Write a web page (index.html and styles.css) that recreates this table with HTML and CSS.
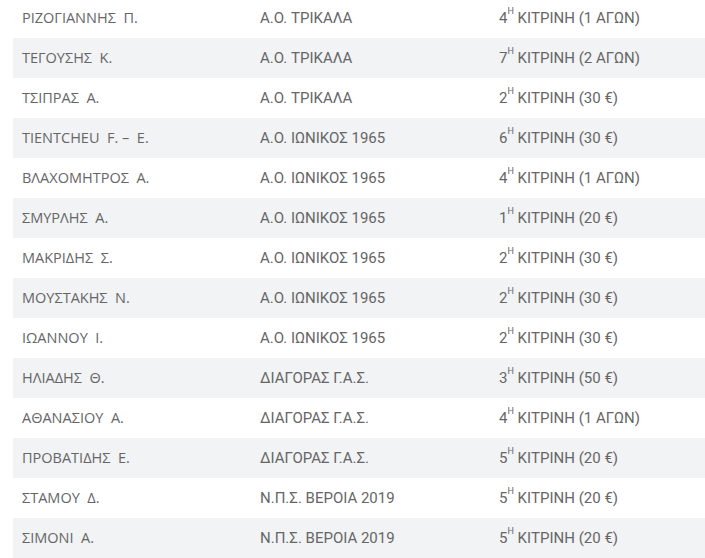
FILE: index.html
```html
<!DOCTYPE html>
<html lang="el">
<head>
<meta charset="utf-8">
<link rel="stylesheet" href="styles.css">
</head>
<body>
<div class="table">
  <div class="row"><div class="c name">ΡΙΖΟΓΙΑΝΝΗΣ&nbsp; Π.</div><div class="c team">Α.Ο. ΤΡΙΚΑΛΑ</div><div class="c pen">4<sup>Η</sup> ΚΙΤΡΙΝΗ (1 ΑΓΩΝ)</div></div>
  <div class="row"><div class="c name">ΤΕΓΟΥΣΗΣ&nbsp; Κ.</div><div class="c team">Α.Ο. ΤΡΙΚΑΛΑ</div><div class="c pen">7<sup>Η</sup> ΚΙΤΡΙΝΗ (2 ΑΓΩΝ)</div></div>
  <div class="row"><div class="c name">ΤΣΙΠΡΑΣ&nbsp; Α.</div><div class="c team">Α.Ο. ΤΡΙΚΑΛΑ</div><div class="c pen">2<sup>Η</sup> ΚΙΤΡΙΝΗ (30 €)</div></div>
  <div class="row"><div class="c name">TIENTCHEU&nbsp; F. –&nbsp; E.</div><div class="c team">Α.Ο. ΙΩΝΙΚΟΣ 1965</div><div class="c pen">6<sup>Η</sup> ΚΙΤΡΙΝΗ (30 €)</div></div>
  <div class="row"><div class="c name">ΒΛΑΧΟΜΗΤΡΟΣ&nbsp; Α.</div><div class="c team">Α.Ο. ΙΩΝΙΚΟΣ 1965</div><div class="c pen">4<sup>Η</sup> ΚΙΤΡΙΝΗ (1 ΑΓΩΝ)</div></div>
  <div class="row"><div class="c name">ΣΜΥΡΛΗΣ&nbsp; Α.</div><div class="c team">Α.Ο. ΙΩΝΙΚΟΣ 1965</div><div class="c pen">1<sup>Η</sup> ΚΙΤΡΙΝΗ (20 €)</div></div>
  <div class="row"><div class="c name">ΜΑΚΡΙΔΗΣ&nbsp; Σ.</div><div class="c team">Α.Ο. ΙΩΝΙΚΟΣ 1965</div><div class="c pen">2<sup>Η</sup> ΚΙΤΡΙΝΗ (30 €)</div></div>
  <div class="row"><div class="c name">ΜΟΥΣΤΑΚΗΣ&nbsp; Ν.</div><div class="c team">Α.Ο. ΙΩΝΙΚΟΣ 1965</div><div class="c pen">2<sup>Η</sup> ΚΙΤΡΙΝΗ (30 €)</div></div>
  <div class="row"><div class="c name">ΙΩΑΝΝΟΥ&nbsp; Ι.</div><div class="c team">Α.Ο. ΙΩΝΙΚΟΣ 1965</div><div class="c pen">2<sup>Η</sup> ΚΙΤΡΙΝΗ (30 €)</div></div>
  <div class="row"><div class="c name">ΗΛΙΑΔΗΣ&nbsp; Θ.</div><div class="c team">ΔΙΑΓΟΡΑΣ Γ.Α.Σ.</div><div class="c pen">3<sup>Η</sup> ΚΙΤΡΙΝΗ (50 €)</div></div>
  <div class="row"><div class="c name">ΑΘΑΝΑΣΙΟΥ&nbsp; Α.</div><div class="c team">ΔΙΑΓΟΡΑΣ Γ.Α.Σ.</div><div class="c pen">4<sup>Η</sup> ΚΙΤΡΙΝΗ (1 ΑΓΩΝ)</div></div>
  <div class="row"><div class="c name">ΠΡΟΒΑΤΙΔΗΣ&nbsp; Ε.</div><div class="c team">ΔΙΑΓΟΡΑΣ Γ.Α.Σ.</div><div class="c pen">5<sup>Η</sup> ΚΙΤΡΙΝΗ (20 €)</div></div>
  <div class="row"><div class="c name">ΣΤΑΜΟΥ&nbsp; Δ.</div><div class="c team">Ν.Π.Σ. ΒΕΡΟΙΑ 2019</div><div class="c pen">5<sup>Η</sup> ΚΙΤΡΙΝΗ (20 €)</div></div>
  <div class="row"><div class="c name">ΣΙΜΟΝΙ&nbsp; Α.</div><div class="c team">Ν.Π.Σ. ΒΕΡΟΙΑ 2019</div><div class="c pen">5<sup>Η</sup> ΚΙΤΡΙΝΗ (20 €)</div></div>
</div>
</body>
</html>
```
FILE: styles.css
```css
html, body {
  margin: 0;
  padding: 0;
  background: #fff;
  overflow: hidden;
}
.table {
  margin: -2px 0 0 13px;
  color: #666;
}
.row {
  display: grid;
  grid-template-columns: 238px 239px 1fr;
  height: 40px;
  align-items: center;
}
.row:nth-child(even) {
  background: #f2f3f5;
}
.c {
  padding-left: 9px;
  white-space: nowrap;
}
.name {
  font-family: "Open Sans", sans-serif;
  font-size: 14.5px;
  margin-top: -1px;
}
.team, .pen {
  font-family: Roboto, sans-serif;
  font-size: 15px;
}
.pen sup {
  font-size: 9px;
  vertical-align: top;
  position: relative;
  top: -2px;
  line-height: 1;
}
```
